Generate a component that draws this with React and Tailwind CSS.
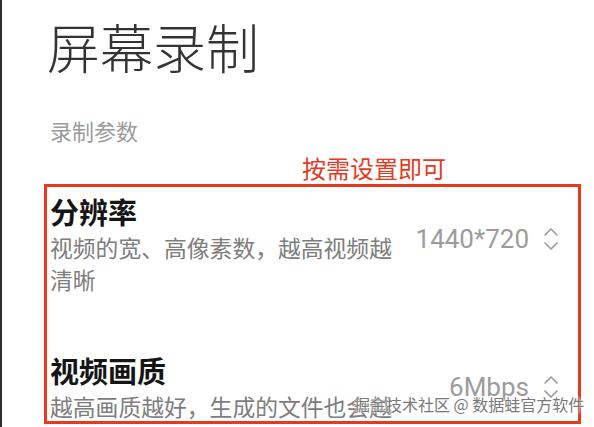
const cjk = '"Noto Sans CJK SC", "Noto Sans", sans-serif'
const num = 'Roboto, "Noto Sans CJK SC", sans-serif'

function UpDown() {
  return (
    <svg width="14" height="26" viewBox="0 0 14 26" fill="none" stroke="#9a9a9a" strokeWidth="1.6" strokeLinecap="round" strokeLinejoin="round" className="shrink-0">
      <polyline points="1,9 7,3 13,9" />
      <polyline points="1,17 7,23 13,17" />
    </svg>
  )
}

function SettingRow({ title, desc, value, valueTop }) {
  return (
    <div className="flex items-start justify-between">
      <div className="w-[350px]">
        <div className="text-[29px] leading-[29px] font-bold text-[#151515]">{title}</div>
        <div className="mt-[6px] text-[22.8px] leading-[32px] text-[#7d7d7d]">{desc}</div>
      </div>
      <div className="flex items-center gap-[15px]" style={{ marginTop: valueTop }}>
        <span className="text-[26px] leading-[30px] font-normal text-[#9c9c9c]" style={{ fontFamily: num }}>
          {value}
        </span>
        <UpDown />
      </div>
    </div>
  )
}

export default function App() {
  return (
    <div
      className="relative h-[427px] w-[594px] overflow-hidden border-l-2 border-[#2f2f2f] bg-white pl-[48px] pr-[36px] pt-[19px]"
      style={{ fontFamily: cjk }}
    >
      <h1 className="-ml-[3px] text-[53px] leading-[54px] font-light text-[#333333]">屏幕录制</h1>
      <div className="mt-[46px] text-[22px] leading-[22px] text-[#9b9b9b]">录制参数</div>

      <div className="mt-[56px]">
        <SettingRow
          title="分辨率"
          desc="视频的宽、高像素数，越高视频越清晰"
          value="1440*720"
          valueTop={27}
        />
      </div>
      <div className="mt-[60px]">
        <SettingRow
          title="视频画质"
          desc="越高画质越好，生成的文件也会越大"
          value="6Mbps"
          valueTop={16}
        />
      </div>

      <div className="absolute left-[300px] top-[154px] text-[24px] leading-[28px] text-[#e8391d]">按需设置即可</div>
      <div className="absolute left-[42px] top-[184px] h-[240px] w-[537px] border-[3px] border-[#e8391d]" />
      <div className="absolute left-[352px] top-[394px] text-[16px] leading-[20px] text-[#7a7a7a] [text-shadow:0_0_2px_#ffffff,0_0_2px_#ffffff]">
        掘金技术社区 @ 数据蛙官方软件
      </div>
    </div>
  )
}
